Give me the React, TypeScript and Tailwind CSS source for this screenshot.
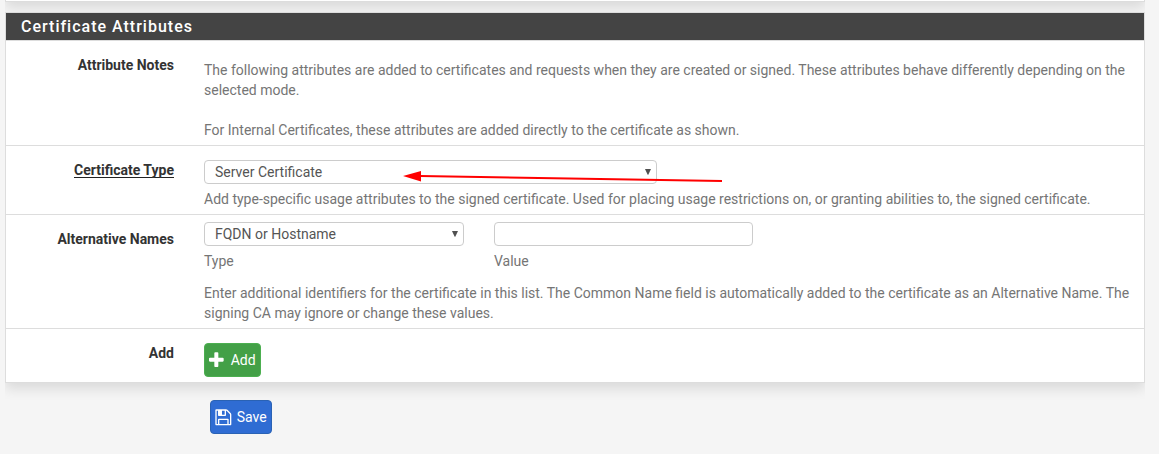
import type { ReactNode } from 'react';

function Row({ label, top, height, last, underline, children }: {
  label: string;
  top: string;
  height: string;
  last?: boolean;
  underline?: boolean;
  children: ReactNode;
}) {
  return (
    <div className={`flex ${height} ${last ? '' : 'border-b border-[#dddddd]'}`}>
      <div className={`w-[168px] shrink-0 text-right font-bold text-[#333333] ${top}`}>
        <span className={underline ? 'inline-block h-[18px] border-b border-[#212121]' : ''}>{label}</span>
      </div>
      <div className="ml-[30px] min-w-0 flex-1">{children}</div>
    </div>
  );
}

function SelectBox({ value, width }: { value: string; width: string }) {
  return (
    <div className={`flex h-6 items-center justify-between rounded-[4px] border border-[#cccccc] bg-white pr-[5px] pl-[10px] text-[#555555] ${width}`}>
      <span>{value}</span>
      <svg className="h-[6px] w-[6px]" viewBox="0 0 6 6" fill="#505050">
        <path d="M0 0h6L3.3 5.800h-.6z" />
      </svg>
    </div>
  );
}

export default function App() {
  return (
    <div className="h-[454px] w-[1159px] overflow-hidden bg-[#f5f5f5] pl-[5px] font-['Roboto',sans-serif] text-[14px] leading-5 text-[#757575]">
      <div className="-mt-10 h-[42px] w-[1140px] border border-[#dddddd] bg-white shadow-[0_6px_12px_rgba(0,0,0,0.11)] [clip-path:inset(0_0_-20px_0)]" />
      <section className="relative mt-[10px] w-[1140px] border border-[#dddddd] bg-white shadow-[0_6px_12px_rgba(0,0,0,0.11)] [clip-path:inset(0_0_-20px_0)]">
        <h2 className="h-7 border-b border-[#dddddd] bg-[#444444] bg-clip-padding pl-[15px] text-[16px] leading-[27px] font-medium tracking-[1px] text-white">
          Certificate Attributes
        </h2>
        <Row label="Attribute Notes" top="pt-[14px]" height="h-[105px]">
          <p className="pt-[19px]">
            The following attributes are added to certificates and requests when they are created or signed. These attributes behave differently depending on the selected mode.
          </p>
          <p className="pt-5">For Internal Certificates, these attributes are added directly to the certificate as shown.</p>
        </Row>
        <Row label="Certificate Type" top="pt-[14px]" height="h-[69px]" underline>
          <div className="relative pt-[14px]">
            <SelectBox value="Server Certificate" width="w-[453px]" />
            <svg className="pointer-events-none absolute top-[22px] left-[196px] h-5 w-[330px]" viewBox="400 168 330 20">
              <path d="M420 176L722 181" stroke="#ff0000" strokeWidth="2" />
              <path d="M403 176L421 171V181.500Z" fill="#ff0000" />
            </svg>
          </div>
          <p className="pt-[5px]">
            Add type-specific usage attributes to the signed certificate. Used for placing usage restrictions on, or granting abilities to, the signed certificate.
          </p>
        </Row>
        <Row label="Alternative Names" top="pt-[14px]" height="h-[114px]">
          <div className="flex gap-[30px] pt-[7px]">
            <div>
              <SelectBox value="FQDN or Hostname" width="w-[260px]" />
              <p className="pt-[5px]">Type</p>
            </div>
            <div>
              <input aria-label="Value" className="block h-6 w-[259px] rounded-[4px] border border-[#cccccc] bg-white px-[10px]" />
              <p className="pt-[5px]">Value</p>
            </div>
          </div>
          <p className="pt-3">
            Enter additional identifiers for the certificate in this list. The Common Name field is automatically added to the certificate as an Alternative Name. The signing CA may ignore or change these values.
          </p>
        </Row>
        <Row label="Add" top="pt-[14px]" height="h-[53px]" last>
          <button className="mt-[14px] flex h-[34px] w-[57px] items-center rounded-[4px] border border-[#4caf50] bg-[#43a047] pl-[1.6px] text-white">
            <svg className="h-[18.67px] w-[18.67px] shrink-0" viewBox="0 0 1792 1792" fill="currentColor">
              <path d="M1600 736v192q0 40-28 68t-68 28h-416v416q0 40-28 68t-68 28h-192q-40 0-68-28t-28-68v-416h-416q-40 0-68-28t-28-68v-192q0-40 28-68t68-28h416v-416q0-40 28-68t68-28h192q40 0 68 28t28 68v416h416q40 0 68 28t28 68z" />
            </svg>
            <span className="ml-[5.4px]">Add</span>
          </button>
        </Row>
      </section>
      <button className="relative mt-[17px] ml-[205px] flex h-[34px] w-[62px] items-center rounded-[4px] border border-[#2a62b4] bg-[#2f6cd3] pl-[2.6px] text-white">
        <svg className="h-[18.67px] w-[18.67px] shrink-0" viewBox="0 0 1792 1792" fill="currentColor">
          <path d="M512 1536h768v-384h-768v384zm896 0h128v-896q0-14-10-38.5t-20-34.5l-281-281q-10-10-34-20t-39-10v416q0 40-28 68t-68 28h-576q-40 0-68-28t-28-68v-416h-128v1280h128v-416q0-40 28-68t68-28h832q40 0 68 28t28 68v416zm-384-928v-320q0-13-9.5-22.5t-22.5-9.5h-192q-13 0-22.5 9.5t-9.5 22.5v320q0 13 9.5 22.5t22.5 9.5h192q13 0 22.5-9.5t9.5-22.5zm640 32v928q0 40-28 68t-68 28h-1344q-40 0-68-28t-28-68v-1344q0-40 28-68t68-28h928q40 0 88 20t76 48l280 280q28 28 48 76t20 88z" />
        </svg>
        <span className="ml-[4.4px]">Save</span>
      </button>
    </div>
  );
}
